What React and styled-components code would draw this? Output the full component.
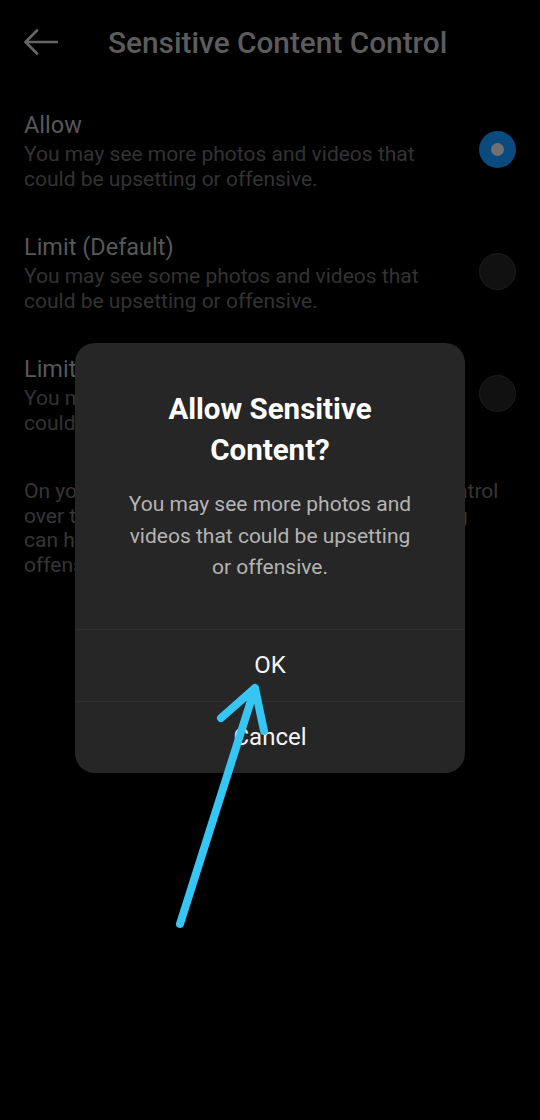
import React from "react";
import styled, { createGlobalStyle } from "styled-components";

const GlobalStyle = createGlobalStyle`
  html, body {
    margin: 0;
    padding: 0;
    background: #000;
  }
  body {
    font-family: Roboto, "Noto Sans", sans-serif;
  }
`;

const Screen = styled.div`
  position: relative;
  width: 540px;
  height: 1120px;
  background: #000;
  overflow: hidden;
`;

const Header = styled.header`
  display: flex;
  align-items: center;
  height: 84px;
  padding-left: 24px;
`;

const BackButton = styled.button`
  display: flex;
  align-items: center;
  padding: 0;
  border: 0;
  background: none;
  width: 34px;
  height: 34px;
`;

const Title = styled.h1`
  margin: 0 0 0 50px;
  font-size: 29.8px;
  font-weight: 500;
  color: #5c5c5c;
`;

const Options = styled.div`
  display: flex;
  flex-direction: column;
  gap: 39px;
  padding: 24px 24px 0 24px;
`;

const Option = styled.div`
  display: flex;
  align-items: center;
  justify-content: space-between;
`;

const OptionText = styled.div`
  display: flex;
  flex-direction: column;
`;

const OptionLabel = styled.div`
  font-size: 23.5px;
  line-height: 34px;
  color: #585858;
`;

const OptionHint = styled.div`
  font-size: 21px;
  line-height: 24.5px;
  color: #333;
  white-space: pre-line;
`;

const Radio = styled.span`
  flex: none;
  display: flex;
  align-items: center;
  justify-content: center;
  width: 37px;
  height: 37px;
  border-radius: 50%;
  box-sizing: border-box;
  background: ${(p) => (p.checked ? "#0b4a7c" : "#111")};
  border: ${(p) => (p.checked ? "none" : "1.5px solid #1c1c1c")};

  &::after {
    content: "";
    display: ${(p) => (p.checked ? "block" : "none")};
    width: 13px;
    height: 13px;
    border-radius: 50%;
    background: #707070;
  }
`;

const Footnote = styled.p`
  margin: 44px 24px 0 24px;
  font-size: 21px;
  line-height: 24.7px;
  color: #363636;
  white-space: pre;
`;

const Overlay = styled.div`
  position: absolute;
  inset: 0;
  display: flex;
  align-items: center;
  justify-content: center;
  padding-bottom: 4px;
`;

const Dialog = styled.div`
  width: 390px;
  border-radius: 20px;
  background: #262626;
  overflow: hidden;
`;

const DialogBody = styled.div`
  padding: 46px 20px 45px;
  text-align: center;
`;

const DialogTitle = styled.h2`
  margin: 0;
  font-size: 29.5px;
  line-height: 41px;
  font-weight: 700;
  color: #fff;
`;

const DialogMessage = styled.p`
  margin: 18px 0 0;
  font-size: 21px;
  line-height: 31.5px;
  color: #b4b4b4;
`;

const DialogButton = styled.button`
  display: block;
  width: 100%;
  height: 72px;
  padding: 0;
  border: 0;
  border-top: 1.5px solid #2f2f2f;
  background: none;
  font-family: Roboto, "Noto Sans", sans-serif;
  font-size: 24px;
  color: #f4f4f4;
`;

const Pointer = styled.svg`
  position: absolute;
  inset: 0;
  pointer-events: none;
`;

const options = [
  {
    label: "Allow",
    hint: "You may see more photos and videos that\ncould be upsetting or offensive.",
    checked: true,
  },
  {
    label: "Limit (Default)",
    hint: "You may see some photos and videos that\ncould be upsetting or offensive.",
  },
  {
    label: "Limit Even More",
    hint: "You may see fewer photos and videos that\ncould be upsetting or offensive.",
  },
];

const BackIcon = () => (
  <svg width="34" height="26" viewBox="0 0 34 26" fill="none">
    <path
      d="M33 13H2M13 1.5L1.5 13L13 24.5"
      stroke="#666"
      strokeWidth="2.6"
      strokeLinecap="round"
      strokeLinejoin="round"
    />
  </svg>
);

const App = () => {
  return (
    <Screen>
      <GlobalStyle />
      <Header>
        <BackButton aria-label="Back">
          <BackIcon />
        </BackButton>
        <Title>Sensitive Content Control</Title>
      </Header>

      <Options>
        {options.map((o) => (
          <Option key={o.label}>
            <OptionText>
              <OptionLabel>{o.label}</OptionLabel>
              <OptionHint>{o.hint}</OptionHint>
            </OptionText>
            <Radio checked={o.checked} />
          </Option>
        ))}
      </Options>

      <Footnote>
        {"On your account, you can decide how much control\nover the sensitive content that you see. Limiting\ncan help you avoid content that could be\noffensive."}
      </Footnote>

      <Overlay>
        <Dialog>
          <DialogBody>
            <DialogTitle>
              Allow Sensitive
              <br />
              Content?
            </DialogTitle>
            <DialogMessage>
              You may see more photos and
              <br />
              videos that could be upsetting
              <br />
              or offensive.
            </DialogMessage>
          </DialogBody>
          <DialogButton>OK</DialogButton>
          <DialogButton>Cancel</DialogButton>
        </Dialog>
      </Overlay>

      <Pointer width="540" height="1120" viewBox="0 0 540 1120">
        <path
          d="M180 924L255 688M221 718L255 688L264 731"
          stroke="#35c6f4"
          strokeWidth="8"
          strokeLinecap="round"
          strokeLinejoin="round"
          fill="none"
        />
      </Pointer>
    </Screen>
  );
};

export default App;
